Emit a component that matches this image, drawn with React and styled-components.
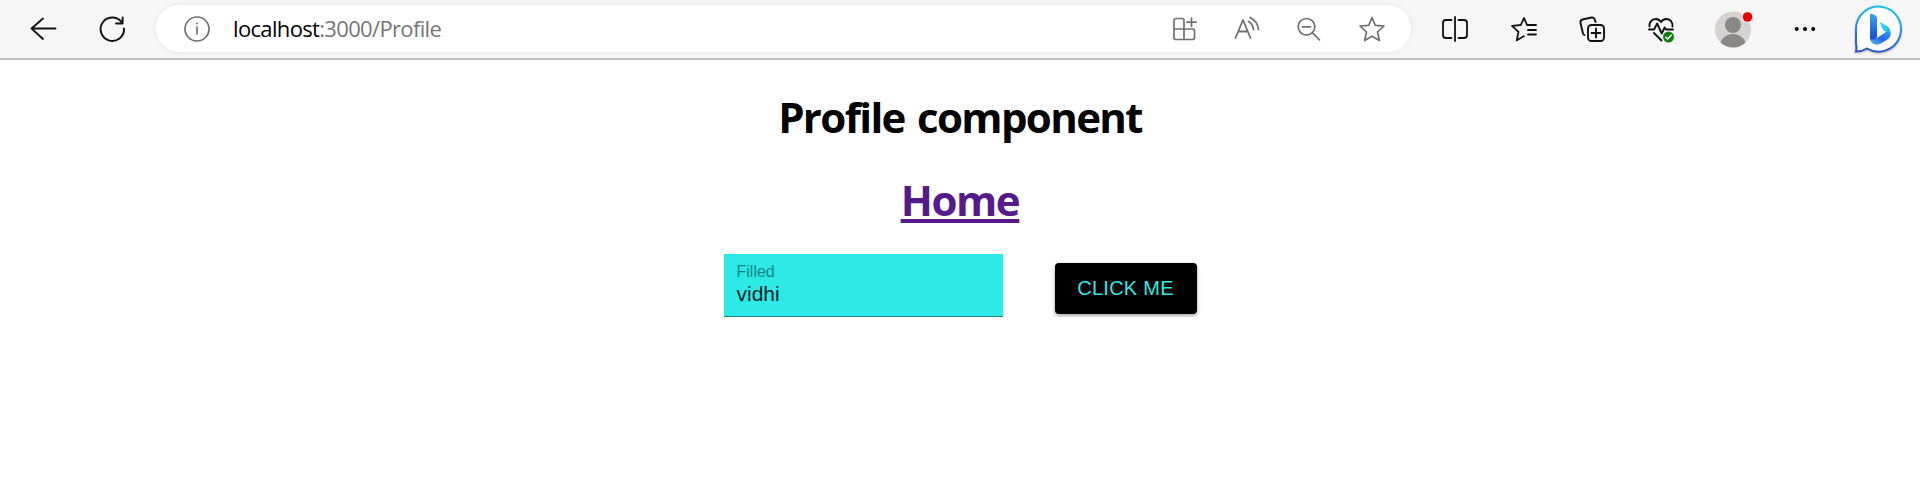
import React from "react";
import styled, { createGlobalStyle } from "styled-components";

const GlobalStyle = createGlobalStyle`
  * { box-sizing: border-box; }
  body { margin: 0; background: #fff; font-family: "Open Sans", "Noto Sans", sans-serif; }
`;

const Toolbar = styled.header`
  height: 60px;
  display: flex;
  align-items: flex-start;
  background: #f6f6f6;
  border-bottom: 2px solid #bdbdbd;
`;

const NavGroup = styled.nav`
  width: 156px;
  height: 57px;
  padding-left: 27px;
  display: flex;
  align-items: center;
  gap: 37px;
`;

const IconButton = styled.button`
  width: 32px;
  height: 32px;
  flex: none;
  padding: 0;
  border: 0;
  background: none;
  color: ${(p) => p.$color || "#111"};
  display: grid;
  place-items: center;
`;

const AddressBar = styled.div`
  width: 1255px;
  height: 47px;
  margin-top: 5px;
  padding-left: 25px;
  border-radius: 24px;
  background: #fff;
  box-shadow: 0 0 5px rgba(0, 0, 0, 0.08);
  display: flex;
  align-items: center;
`;

const Url = styled.div`
  margin-left: 20px;
  padding-bottom: 2px;
  flex: 1;
  font-size: 22px;
  line-height: 30px;
  letter-spacing: -0.66px;
  color: #767676;
  white-space: nowrap;
`;

const Host = styled.span`
  color: #000;
`;

const BarActions = styled.div`
  display: flex;
  gap: 30.5px;
  padding-right: 23.5px;
`;

const ToolGroup = styled.div`
  height: 57px;
  padding-left: 28px;
  display: flex;
  align-items: center;
  gap: 36.5px;
`;

const Avatar = styled.div`
  margin-left: 2px;
  margin-right: -3px;
  width: 40px;
  height: 40px;
`;

const Bing = styled.div`
  width: 56px;
  height: 54px;
  margin-left: -8px;
`;

const Bubble = styled.path`
  filter: drop-shadow(0 1px 1px rgba(0, 0, 0, 0.25));
`;

const Page = styled.main`
  display: flex;
  flex-direction: column;
  align-items: center;
`;

const Title = styled.h1`
  margin: 28px 0 0;
  height: 58px;
  font-size: 42px;
  line-height: 58px;
  font-weight: 700;
  letter-spacing: -1.65px;
  word-spacing: 3px;
  white-space: nowrap;
`;

const HomeLink = styled.a`
  margin-top: 25px;
  height: 58px;
  font-size: 42px;
  line-height: 58px;
  font-weight: 700;
  letter-spacing: -1.4px;
  color: #551a8b;
  text-decoration: underline;
  text-decoration-thickness: 4px;
  text-underline-offset: 3px;
  text-decoration-skip-ink: none;
`;

const FormRow = styled.form`
  margin-top: 25px;
  display: flex;
  align-items: flex-start;
  gap: 52px;
  font-family: "Liberation Sans", sans-serif;
`;

const Field = styled.label`
  width: 279px;
  height: 63px;
  padding: 8px 13px 0;
  background: #2eeae6;
  border-bottom: 1px solid #188886;
  display: flex;
  flex-direction: column;
`;

const FieldLabel = styled.span`
  font-size: 16px;
  line-height: 19px;
  color: #1a8683;
`;

const FieldValue = styled.span`
  font-size: 21px;
  line-height: 26px;
  color: #092222;
`;

const ActionButton = styled.button`
  width: 142px;
  height: 51px;
  margin-top: 9px;
  padding: 0;
  border: 0;
  border-radius: 4px;
  background: #000;
  color: #2eeae6;
  font: 20px "Liberation Sans", sans-serif;
  letter-spacing: 0.25px;
  box-shadow: 0 2px 4px rgba(0, 0, 0, 0.35);
`;

const Icon = ({ children, size = 32, width = 1.5 }) => (
  <svg width={size} height={size} viewBox={`0 0 ${size} ${size}`} fill="none" stroke="currentColor" strokeWidth={width} strokeLinecap="round" strokeLinejoin="round">
    {children}
  </svg>
);

const gray = "#707070";

export default function App() {
  return (
    <>
      <GlobalStyle />
      <Toolbar>
        <NavGroup>
          <IconButton aria-label="Back">
            <Icon width={1.8}><path d="M16 5.5 4.5 15.500 16 26M5 15.5H28.5" /></Icon>
          </IconButton>
          <IconButton aria-label="Refresh">
            <Icon width={1.9}><path d="M28 15.5A11.7 11.7 0 1 1 25.5 9M26.6 4.5V10.5H20" /></Icon>
          </IconButton>
        </NavGroup>
        <AddressBar>
          <IconButton $color={gray} aria-label="Site information">
            <Icon width={1.7}><circle cx="16" cy="16" r="12" /><path d="M16 14v7" /><circle cx="16" cy="10.6" r="1" fill="currentColor" stroke="none" /></Icon>
          </IconButton>
          <Url><Host>localhost</Host>:3000/Profile</Url>
          <BarActions>
            <IconButton $color={gray} aria-label="Apps">
              <Icon width={1.7}><path d="M16 26.500V7.500a2 2 0 0 0-2-2H8a2 2 0 0 0-2 2V24.500a2 2 0 0 0 2 2H24.500a2 2 0 0 0 2-2V18a2 2 0 0 0-2-2H6M23.500 5v8.500M19 9.200h9" /></Icon>
            </IconButton>
            <IconButton $color={gray} aria-label="Read aloud">
              <Icon width={1.8}><path d="M4.500 25 12 7 19.500 25M7.200 18.500H16.800M17.500 8.500q4.300 2.500 5 8M19 4.500q7.500 3.500 8.500 12" /></Icon>
            </IconButton>
            <IconButton $color={gray} aria-label="Zoom out">
              <Icon width={1.7}><circle cx="13.500" cy="13.800" r="8.300" /><path d="M9.500 13.800h8M19.500 19.800l7 7" /></Icon>
            </IconButton>
            <IconButton $color={gray} aria-label="Add favorite">
              <Icon width={1.7}><path d="m16 4.500 3.300 7.800 8.700.7-6.500 6 1.800 8.500-7.300-4.200-7.300 4.200 1.800-8.500L4 13l8.700-.7Z" /></Icon>
            </IconButton>
          </BarActions>
        </AddressBar>
        <ToolGroup>
          <IconButton aria-label="Split screen">
            <Icon width={1.8}><path d="M16 4v24M12.500 7H7a3 3 0 0 0-3 3V22a3 3 0 0 0 3 3h5.500M19.500 7H25a3 3 0 0 1 3 3V22a3 3 0 0 1-3 3h-5.500" /></Icon>
          </IconButton>
          <IconButton aria-label="Favorites">
            <Icon width={1.8}><path d="M20 12h-1l-3-7-3.200 7-8.800.8 6.500 6-1.700 8.500 7-4M20 12h8M20 17h8M20 21.500h8" /></Icon>
          </IconButton>
          <IconButton aria-label="Collections">
            <Icon width={1.9}><rect x="12" y="12" width="16" height="16" rx="3.500" /><path d="M20 15.500v9M15.500 20h9M8.500 22Q7.500 22 7 20.500L4.500 10a3 3 0 0 1 2-3.500l9-2a3 3 0 0 1 3 1.500l1 3" /></Icon>
          </IconButton>
          <IconButton aria-label="Browser essentials">
            <Icon width={1.9}><path d="M4.500 13.500C4 8 8 6 11 6C13.500 6 15 7.500 16 9C17 7.500 19 6 21.500 6C25 6 28 9 27.500 13.500M4 16.500h5l3.200-6 4.500 10 3-6 1.500 2H28M9 20l7.500 7.500" /><circle cx="23.500" cy="24" r="6.200" fill="#f6f6f6" stroke="none" /><circle cx="23.500" cy="24" r="5.500" fill="#107c10" stroke="none" /><path d="m20.800 24.200 1.800 1.800 3.600-3.700" stroke="#fff" strokeWidth="1.500" /></Icon>
          </IconButton>
          <Avatar>
            <svg width="40" height="40" viewBox="0 0 40 40"><clipPath id="avatar-clip"><circle cx="18" cy="20.500" r="18" /></clipPath><circle cx="18" cy="20.500" r="18" fill="#d5d3d0" /><g clipPath="url(#avatar-clip)" fill="#8a8886"><circle cx="18" cy="16" r="8" /><ellipse cx="18" cy="37" rx="13" ry="12" /></g><circle cx="32.500" cy="8" r="5.600" fill="#f6f6f6" /><circle cx="32.500" cy="8" r="4.800" fill="#e60000" /></svg>
          </Avatar>
          <IconButton aria-label="More">
            <Icon><g fill="#000" stroke="none"><circle cx="7.800" cy="16" r="2" /><circle cx="16" cy="16" r="2" /><circle cx="24.200" cy="16" r="2" /></g></Icon>
          </IconButton>
          <Bing>
            <svg width="56" height="54" viewBox="0 0 56 54">
              <defs>
                <linearGradient id="bubble" x1=".6" y1="0" x2=".4" y2="1"><stop stopColor="#19c5ef" /><stop offset=".55" stopColor="#2684e8" /><stop offset="1" stopColor="#2450cf" /></linearGradient>
                <linearGradient id="stem" x1="0" y1="0" x2="0" y2="1"><stop stopColor="#35a2f5" /><stop offset="1" stopColor="#1746d1" /></linearGradient>
                <linearGradient id="bowl" x1="0" y1="1" x2="1" y2="0"><stop stopColor="#55c4f5" /><stop offset=".5" stopColor="#2567e8" /><stop offset="1" stopColor="#2f9cf0" /></linearGradient>
                <linearGradient id="tip" x1="0" y1="0" x2="1" y2="1"><stop stopColor="#35e3e6" /><stop offset="1" stopColor="#2aa8ee" /></linearGradient>
              </defs>
              <Bubble d="M7 49.500Q8 46 7 41V27A22.500 22.500 0 1 1 18 46.500Q13 49.500 7 49.500Z" fill="#fff" stroke="url(#bubble)" strokeWidth="2" />
              <path d="M22 11.500 26.500 13.500Q28 14.500 28 16.500V35Q27 38 22 39Q21 38 21 36V12.500Q21 11 22 11.500Z" fill="url(#stem)" />
              <path d="M21 36Q23 39 28 36L37 30L41.500 30Q42.500 35 38.500 37.500L31 42Q27 43.500 23.500 41.500Q21 39.500 21 36Z" fill="url(#bowl)" />
              <path d="M32 20.500 38 24Q42 26.500 41.500 31.500Q40 30.500 36.500 29.500Q34 28.500 33 26L31 21.500Q30.500 20 32 20.500Z" fill="url(#tip)" />
            </svg>
          </Bing>
        </ToolGroup>
      </Toolbar>
      <Page>
        <Title>Profile component</Title>
        <HomeLink>Home</HomeLink>
        <FormRow>
          <Field><FieldLabel>Filled</FieldLabel><FieldValue>vidhi</FieldValue></Field>
          <ActionButton type="button">CLICK ME</ActionButton>
        </FormRow>
      </Page>
    </>
  );
}
